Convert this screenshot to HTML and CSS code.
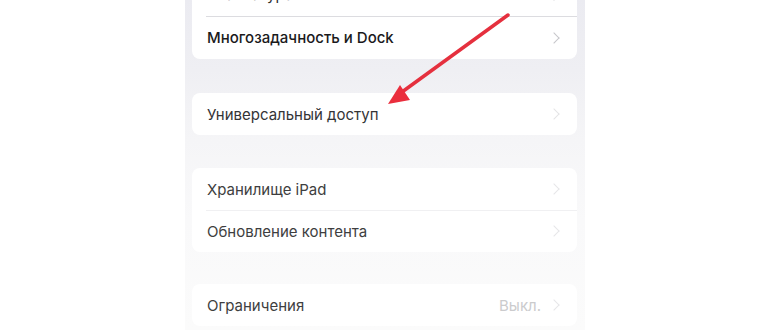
FILE: index.html
```html
<!DOCTYPE html>
<html lang="ru">
<head>
    <meta charset="UTF-8">
    <title>Настройки</title>
    <link rel="stylesheet" href="styles.css">
</head>
<body>
    <div class="screen">
        <div class="group group-top">
            <div class="row"><span class="label">Клавиатура</span><span class="chevron"></span></div>
            <div class="row"><span class="label strong">Многозадачность и Dock</span><span class="chevron"></span></div>
        </div>

        <div class="group group-access">
            <div class="row"><span class="label">Универсальный доступ</span><span class="chevron"></span></div>
        </div>

        <div class="group group-storage faded">
            <div class="row"><span class="label">Хранилище iPad</span><span class="chevron"></span></div>
            <div class="row"><span class="label">Обновление контента</span><span class="chevron"></span></div>
        </div>

        <div class="group group-limits faded">
            <div class="row"><span class="label">Ограничения</span><span class="value">Выкл.</span><span class="chevron"></span></div>
        </div>

        <svg class="arrow" width="140" height="100" viewBox="0 0 140 100">
            <line x1="128" y1="15" x2="22" y2="92" stroke="#e5303e" stroke-width="3.5" stroke-linecap="round"/>
            <polygon points="8,104 20,85 30,100" fill="#ea2e3d"/>
        </svg>
    </div>
</body>
</html>
```

FILE: styles.css
```css
body {
    margin: 0;
    background-color: #ffffff;
    font-family: Inter, "Noto Sans", sans-serif;
}

.screen {
    position: relative;
    width: 400px;
    height: 330px;
    margin-left: 185px;
    overflow: hidden;
    background: linear-gradient(#ebebf1 0, #efeff3 70px, #f5f5f7 140px, #f9f9fa 220px, #fbfbfb 330px);
}

.group {
    margin: 0 8px 0 7px;
    background-color: #ffffff;
    border-radius: 8px;
}

.group-top {
    margin-top: -27px;
}

.group-access {
    margin-top: 34px;
}

.group-storage {
    margin-top: 33px;
}

.group-limits {
    margin-top: 32px;
}

.row {
    display: flex;
    align-items: center;
    height: 42px;
    padding: 0 17px 0 15px;
    position: relative;
}

.group-top .row {
    height: 43px;
}

.row + .row::before {
    content: "";
    position: absolute;
    top: 0;
    left: 14px;
    right: 0;
    height: 1px;
    background-color: #dcdce0;
}

.faded .row + .row::before {
    background-color: #f0f0f2;
}

.label {
    flex: 1;
    font-size: 15px;
    color: #2e2e30;
}

.label.strong {
    color: #1a1a1c;
    font-weight: 500;
}

.value {
    font-size: 15px;
    color: #cbcbcd;
    margin-right: 9px;
}

.chevron {
    width: 7px;
    height: 7px;
    border-top: 1.6px solid #c6c6ca;
    border-right: 1.6px solid #c6c6ca;
    transform: rotate(45deg);
    margin-right: 2px;
}

.faded .label {
    color: #3e3e40;
}

.faded .chevron {
    border-color: #e6e6e8;
}

.group-access .chevron {
    border-color: #e4e4e6;
}

.group-access .label {
    color: #343436;
}

.arrow {
    position: absolute;
    left: 195px;
    top: 0;
    overflow: visible;
}
```
